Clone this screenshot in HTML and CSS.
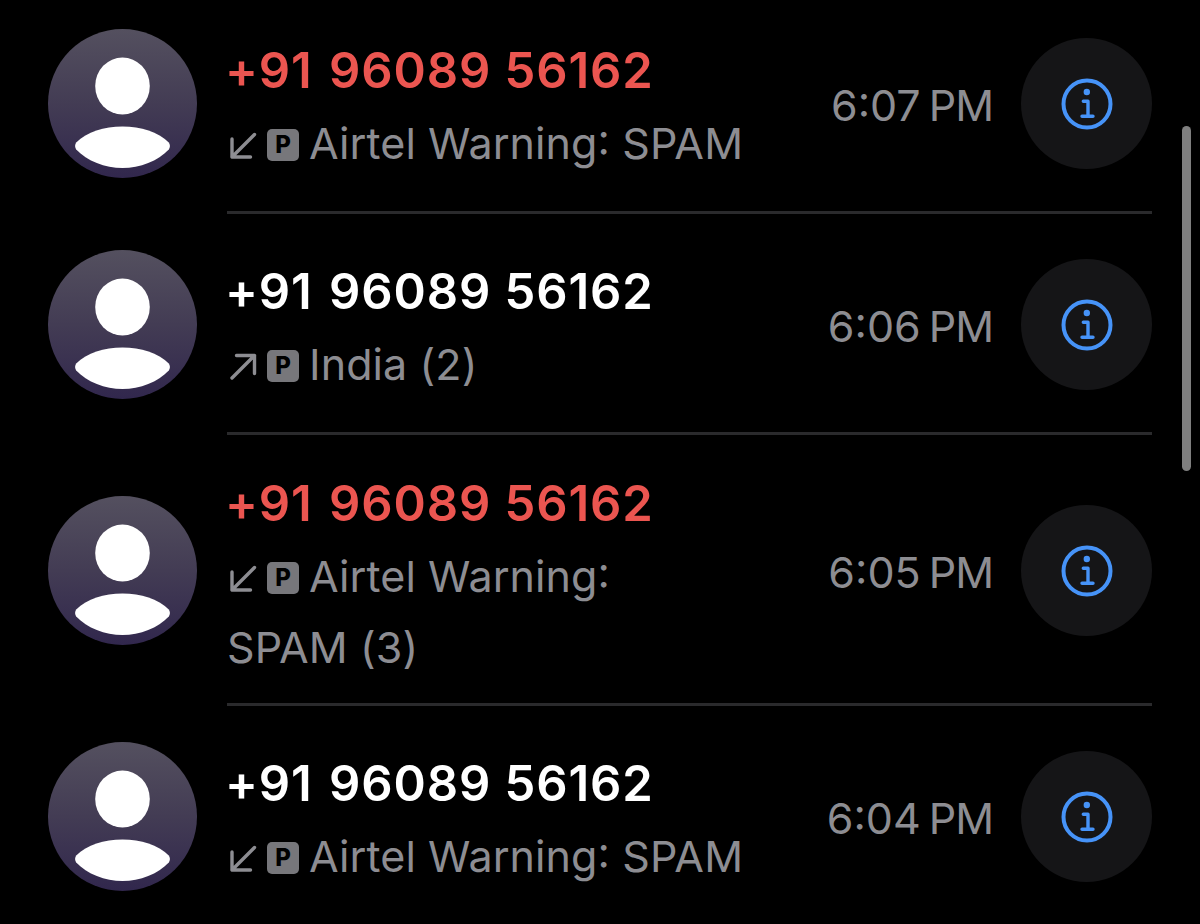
FILE: index.html
```
<!DOCTYPE html>
<html lang="en">
<head>
    <meta charset="UTF-8">
    <meta name="viewport" content="width=device-width, initial-scale=1.0">
    <title>Recents</title>
    <link rel="stylesheet" href="styles.css">
</head>
<body>
    <!-- Shared icons -->
    <svg class="sprite" aria-hidden="true">
        <defs>
            <linearGradient id="avatarBg" x1="0" y1="0" x2="0" y2="1">
                <stop offset="0" stop-color="#54505f"/>
                <stop offset="0.5" stop-color="#433c54"/>
                <stop offset="1" stop-color="#31274d"/>
            </linearGradient>
            <symbol id="person" viewBox="0 0 149 149">
                <circle cx="74.5" cy="74.5" r="74.5" fill="url(#avatarBg)"/>
                <ellipse cx="74.5" cy="57" rx="27.3" ry="28.5" fill="#fff"/>
                <path d="M28.2 113.5C39 103 56 97.5 74.5 97.5S110 103 120.8 113.5C122.3 115.5 122.3 118.5 120.8 120.5C110 132 92 139 74.5 139S39 132 28.2 120.5C26.7 118.5 26.7 115.5 28.2 113.5Z" fill="#fff"/>
            </symbol>
            <symbol id="incoming" viewBox="0 0 28 28">
                <path d="M25.5 2.5L3 25M3 7V25H21.5" class="stroke"/>
            </symbol>
            <symbol id="outgoing" viewBox="0 0 28 28">
                <path d="M3 25L25.5 2.5M7.5 2.5H25.5V20.5" class="stroke"/>
            </symbol>
            <symbol id="info" viewBox="0 0 52 52">
                <circle cx="26" cy="26" r="23.5" fill="none" stroke="#4693f8" stroke-width="4"/>
                <circle cx="25.8" cy="14" r="3.2" fill="#4693f8"/>
                <path d="M22.3 23.3H27V38M21 38.2H32" fill="none" stroke="#4693f8" stroke-width="3.4" stroke-linecap="round" stroke-linejoin="round"/>
            </symbol>
        </defs>
    </svg>

    <div class="calls">
        <div class="call first">
            <svg class="avatar"><use href="#person"/></svg>
            <div class="content">
                <div class="details">
                    <div class="number missed"><span class="code">+91</span> 96089 56162</div>
                    <div class="label"><svg class="arrow"><use href="#incoming"/></svg><span class="sim">P</span><span class="name">Airtel Warning<span class="colon">:</span> SPAM</span></div>
                </div>
                <div class="time">6:07<span class="pm">PM</span></div>
                <button type="button" class="info" aria-label="Info"><svg><use href="#info"/></svg></button>
            </div>
        </div>
        <div class="call">
            <svg class="avatar"><use href="#person"/></svg>
            <div class="content">
                <div class="details">
                    <div class="number"><span class="code">+91</span> 96089 56162</div>
                    <div class="label"><svg class="arrow"><use href="#outgoing"/></svg><span class="sim">P</span><span class="name">India (2)</span></div>
                </div>
                <div class="time">6:06<span class="pm">PM</span></div>
                <button type="button" class="info" aria-label="Info"><svg><use href="#info"/></svg></button>
            </div>
        </div>
        <div class="call tall">
            <svg class="avatar"><use href="#person"/></svg>
            <div class="content">
                <div class="details">
                    <div class="number missed"><span class="code">+91</span> 96089 56162</div>
                    <div class="label"><svg class="arrow"><use href="#incoming"/></svg><span class="sim">P</span><span class="name">Airtel Warning<span class="colon">:</span><br>SPAM (3)</span></div>
                </div>
                <div class="time">6:05<span class="pm">PM</span></div>
                <button type="button" class="info" aria-label="Info"><svg><use href="#info"/></svg></button>
            </div>
        </div>
        <div class="call">
            <svg class="avatar"><use href="#person"/></svg>
            <div class="content">
                <div class="details">
                    <div class="number"><span class="code">+91</span> 96089 56162</div>
                    <div class="label"><svg class="arrow"><use href="#incoming"/></svg><span class="sim">P</span><span class="name">Airtel Warning<span class="colon">:</span> SPAM</span></div>
                </div>
                <div class="time">6:04<span class="pm">PM</span></div>
                <button type="button" class="info" aria-label="Info"><svg><use href="#info"/></svg></button>
            </div>
        </div>
    </div>
    <div class="scrollbar"></div>
</body>
</html>
```
FILE: styles.css
```
* {
    box-sizing: border-box;
}
body {
    margin: 0;
    height: 924px;
    overflow: hidden;
    background: #000;
    color: #fff;
    font-family: Inter, "Liberation Sans", sans-serif;
}
.sprite {
    position: absolute;
    width: 0;
    height: 0;
}
.calls {
    padding: 0 48px;
}
.call {
    display: flex;
    align-items: center;
    gap: 30px;
    height: 221px;
}
.call.first {
    height: 214px;
}
.call.tall {
    height: 271px;
}
.avatar {
    width: 149px;
    height: 149px;
    flex: none;
}
.first .avatar {
    margin-bottom: 8px;
}
.content {
    flex: 1;
    display: flex;
    align-items: center;
    height: 100%;
    padding-top: 3px;
    border-bottom: 3px solid #2a2a2c;
}
.first .content {
    padding: 0 0 5px;
}
.details {
    flex: 1;
    padding-top: 4px;
    white-space: nowrap;
}
.first .details {
    padding-top: 6px;
}
.tall .details {
    padding-top: 7px;
}
.number {
    margin-left: -2px;
    font-size: 49px;
    font-weight: 600;
    line-height: 75px;
    letter-spacing: 0.9px;
}
.number.missed {
    color: #eb5550;
}
.code {
    margin-right: 3px;
    letter-spacing: 0.9px;
}
.label {
    font-size: 43px;
    line-height: 71px;
    letter-spacing: 0.1px;
    color: #8d8d92;
}
.arrow {
    width: 28px;
    height: 28px;
    margin-left: 2px;
    vertical-align: -1px;
}
.stroke {
    fill: none;
    stroke: #8d8d92;
    stroke-width: 3.4;
    stroke-linecap: round;
    stroke-linejoin: round;
}
.sim {
    display: inline-block;
    width: 32px;
    height: 32px;
    margin: 0 10px 0 10px;
    border-radius: 5px;
    background: #77777b;
    color: #000;
    font-size: 24px;
    font-weight: 800;
    line-height: 32px;
    text-align: center;
    vertical-align: 6px;
}
.colon {
    font-feature-settings: "case";
}
.time {
    padding-top: 3px;
    font-size: 43px;
    color: #8d8d92;
    margin-right: 28px;
}
.pm {
    margin-left: 8px;
    letter-spacing: -1px;
}
.info {
    width: 131px;
    height: 131px;
    padding: 0;
    border: none;
    border-radius: 50%;
    background: #151517;
    display: flex;
    align-items: center;
    justify-content: center;
}
.info svg {
    width: 52px;
    height: 52px;
}
.first .info svg {
    margin-top: 2px;
}
/* sits on top of the list */
.scrollbar {
    position: absolute;
    top: 126px;
    right: 9px;
    width: 9px;
    height: 345px;
    border-radius: 5px;
    background: #7f7f7f;
}
```
